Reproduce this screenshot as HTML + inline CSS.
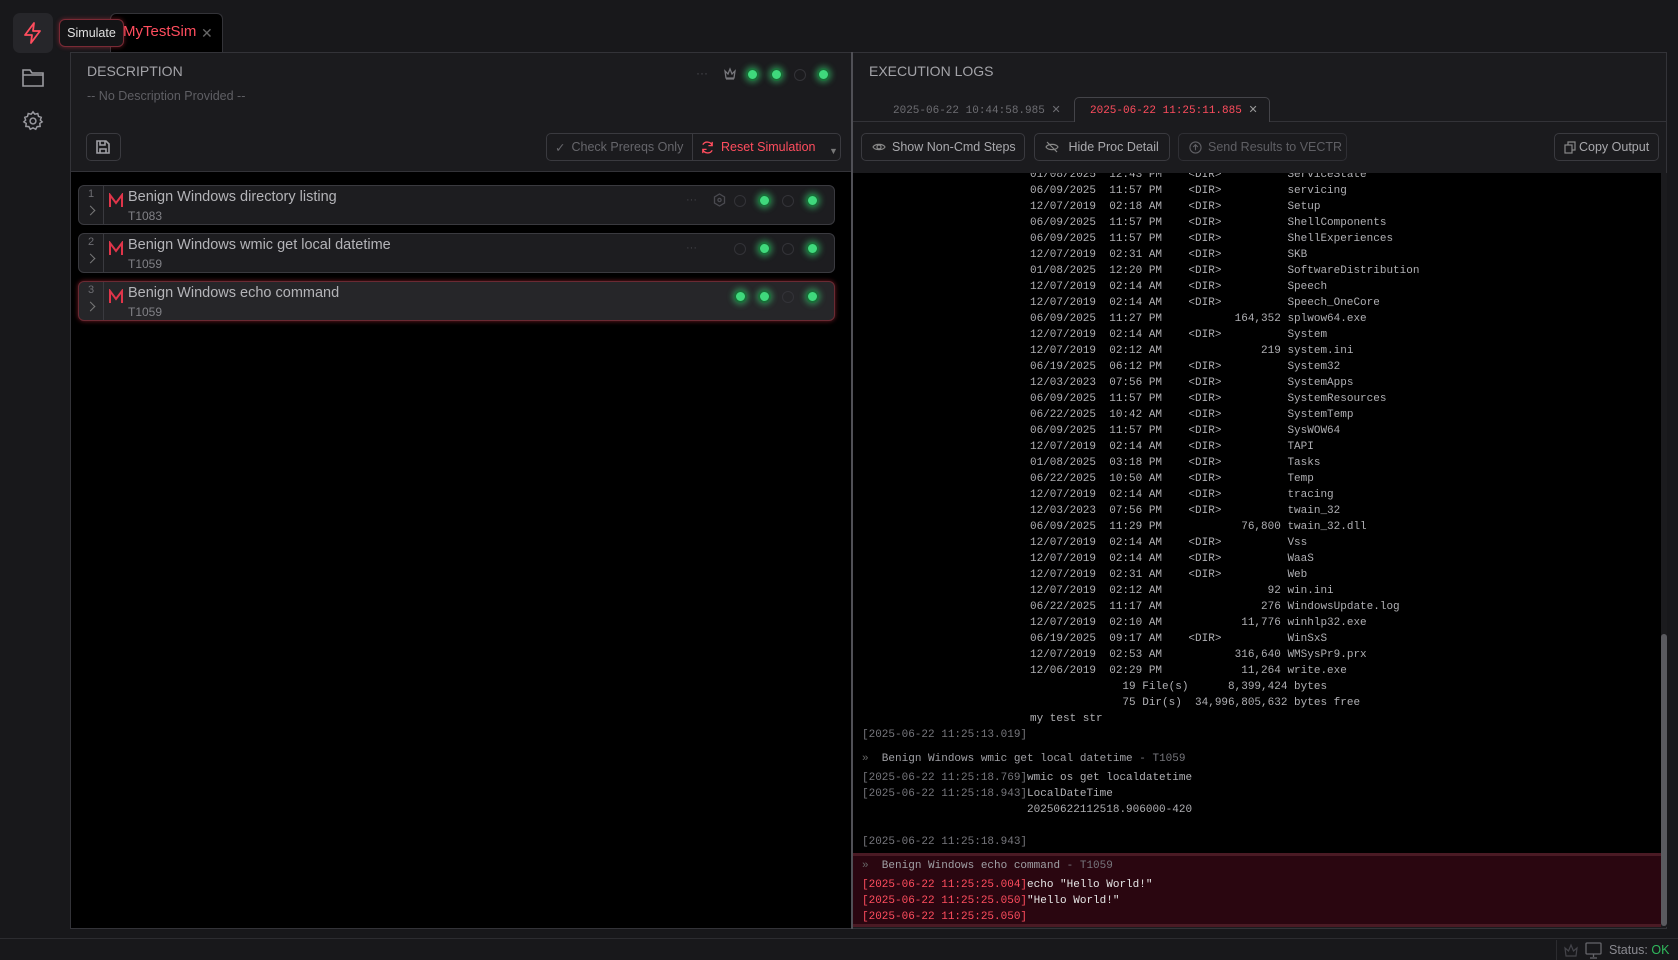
<!DOCTYPE html>
<html><head><meta charset="utf-8">
<style>
*{box-sizing:border-box;margin:0;padding:0}
body{width:1678px;height:960px;background:#18181b;font-family:"Liberation Sans",sans-serif;color:#a9a9ad;position:relative;overflow:hidden}
.abs{position:absolute}
.dot{position:absolute;width:13px;height:13px;border-radius:50%;background:#3fd97c;border:2px solid #1a6b38;box-shadow:0 0 6px 2px rgba(60,220,120,.45)}
.odot{position:absolute;width:12px;height:12px;border-radius:50%;border:1.5px solid #333338}
.btn{position:absolute;border:1px solid #3a3a3f;border-radius:5px;font-size:12.5px;color:#a9a9ad;display:flex;align-items:center;gap:6px;padding-left:10px}
.card{position:absolute;left:78px;width:757px;height:40px;background:#1d1d20;border:1px solid #3a3a3f;border-radius:6px}
.card .num{position:absolute;left:0;top:0;width:25px;height:100%;border-right:1px solid #3a3a3f;color:#6d6d72;font-size:11px;text-align:center;padding-top:2px}
.card .chev{position:absolute;left:8px;top:21px;width:7px;height:7px;border-right:1.5px solid #777;border-top:1.5px solid #777;transform:rotate(45deg)}
.card .t{position:absolute;left:49px;top:3px;font-size:14.5px;color:#b4b4b8}
.card .id{position:absolute;left:49px;top:23px;font-size:12px;color:#818186}
.card svg.m{position:absolute;left:29px;top:7px}
pre{font-family:"Liberation Mono",monospace;font-size:11px;line-height:16px;color:#b0b0b4}
.ts{color:#76767c}
.rts{color:#ff4d5e}
</style></head><body>
<div class="abs" style="left:13px;top:13px;width:40px;height:40px;background:#26262a;border-radius:7px"></div>
<svg class="abs" style="left:21px;top:21px" width="24" height="24" viewBox="0 0 24 24" fill="none" stroke="#ff4d5e" stroke-width="1.8" stroke-linejoin="round"><path d="M13 2 4 14h7l-1 8 9-12h-7l1-8z"/></svg>
<svg class="abs" style="left:21px;top:67px" width="24" height="22" viewBox="0 0 24 22" fill="none" stroke="#9a9aa0" stroke-width="1.6"><path d="M2 3h7l2 3h11v13H2z M2 8h20"/></svg>
<svg class="abs" style="left:22px;top:110px" width="22" height="22" viewBox="0 0 24 24" fill="none" stroke="#9a9aa0" stroke-width="1.6"><circle cx="12" cy="12" r="3.2"/><path d="M12 2l2 2.6 3.2-.8.8 3.2L21 8l-1 3 2 2-2.6 1.6.4 3.3-3.3.2L15 21l-3-1.5L9 21l-1.5-2.9-3.3-.2.4-3.3L2 13l2-2-1-3 3-1 .8-3.2L10 4.6z"/></svg>
<div class="abs" style="left:110px;top:13px;width:113px;height:40px;background:#000;border:1px solid #333338;border-bottom:none;border-radius:6px 6px 0 0"></div>
<div class="abs" style="left:123px;top:23px;font-size:15px;color:#ff4d5e">MyTestSim</div>
<div class="abs" style="left:201px;top:25px;font-size:14px;color:#666">✕</div>
<div class="abs" style="left:59px;top:19px;width:65px;height:28px;background:#141416;border:1px solid #7a2a35;border-radius:6px;box-shadow:0 0 5px rgba(255,60,80,.4);font-size:12.5px;color:#e0e0e0;text-align:center;line-height:26px">Simulate</div>
<div class="abs" style="left:70px;top:52px;width:782px;height:877px;background:#000;border:1px solid #333338"></div>
<div class="abs" style="left:71px;top:53px;width:780px;height:119px;background:#1b1b1e;border-bottom:1px solid #333338"></div>
<div class="abs" style="left:87px;top:63px;font-size:14px;color:#a3a3a8">DESCRIPTION</div>
<div class="abs" style="left:87px;top:89px;font-size:12.5px;color:#5f5f64">-- No Description Provided --</div>
<div class="abs" style="left:696px;top:66px;font-size:12px;color:#4a4a4f">···</div>
<svg class="abs" style="left:723px;top:67px" width="14" height="14" viewBox="0 0 14 14" fill="none" stroke="#77777c" stroke-width="1.3"><path d="M2 4l3 3 2-5 2 5 3-3-1 7H3z M3 12h8"/></svg>
<div class="dot" style="left:746px;top:68px"></div><div class="dot" style="left:770px;top:68px"></div><div class="odot" style="left:794px;top:69px"></div><div class="dot" style="left:817px;top:68px"></div>
<div class="abs" style="left:86px;top:133px;width:35px;height:28px;border:1px solid #3a3a3f;border-radius:5px"></div>
<svg class="abs" style="left:95px;top:139px" width="16" height="16" viewBox="0 0 16 16" fill="none" stroke="#a0a0a5" stroke-width="1.6"><path d="M2 2h9l3 3v9H2z M5 2v4h5V2 M5 14v-4h6v4"/></svg>
<div class="btn" style="left:546px;top:133px;width:295px;height:28px;padding-left:8px;color:#66666b"><span>✓</span><span>Check Prereqs Only</span></div>
<div class="abs" style="left:692px;top:134px;width:1px;height:26px;background:#3a3a3f"></div>
<svg class="abs" style="left:700px;top:140px" width="15" height="15" viewBox="0 0 16 16" fill="none" stroke="#ff4d5e" stroke-width="1.4"><path d="M13 6a5.5 5.5 0 0 0-10-1 M3 10a5.5 5.5 0 0 0 10 1 M13 2v4h-4 M3 14v-4h4"/></svg>
<div class="abs" style="left:721px;top:140px;font-size:12.5px;color:#ff4d5e">Reset Simulation</div>
<div class="abs" style="left:829px;top:146px;font-size:9px;color:#777">▼</div>
<div class="card" style="top:185px"><div class="num">1</div><div class="chev"></div><svg class="m" width="16" height="15" viewBox="0 0 16 15" fill="none" stroke="#e0354a" stroke-width="2"><path d="M2 14V2l6 8 6-8v12"/></svg><div class="t">Benign Windows directory listing</div><div class="id">T1083</div>
<div class="abs" style="left:607px;top:8px;font-size:11px;color:#44444a">···</div>
<svg class="abs" style="left:634px;top:7px" width="13" height="14" viewBox="0 0 13 14" fill="none" stroke="#4a4a50" stroke-width="1.3"><path d="M6.5 1l5 3v6l-5 3-5-3V4z"/><circle cx="6.5" cy="7" r="1.6"/></svg>
<div class="odot" style="left:655px;top:9px"></div><div class="dot" style="left:679px;top:8px"></div><div class="odot" style="left:703px;top:9px"></div><div class="dot" style="left:727px;top:8px"></div></div>
<div class="card" style="top:233px"><div class="num">2</div><div class="chev"></div><svg class="m" width="16" height="15" viewBox="0 0 16 15" fill="none" stroke="#e0354a" stroke-width="2"><path d="M2 14V2l6 8 6-8v12"/></svg><div class="t">Benign Windows wmic get local datetime</div><div class="id">T1059</div>
<div class="abs" style="left:607px;top:8px;font-size:11px;color:#44444a">···</div>
<div class="odot" style="left:655px;top:9px"></div><div class="dot" style="left:679px;top:8px"></div><div class="odot" style="left:703px;top:9px"></div><div class="dot" style="left:727px;top:8px"></div></div>
<div class="card" style="top:281px;background:#262629;border-color:#6a2a33;box-shadow:0 0 5px rgba(255,60,80,.45)"><div class="num">3</div><div class="chev"></div><svg class="m" width="16" height="15" viewBox="0 0 16 15" fill="none" stroke="#e0354a" stroke-width="2"><path d="M2 14V2l6 8 6-8v12"/></svg><div class="t">Benign Windows echo command</div><div class="id">T1059</div>
<div class="dot" style="left:655px;top:8px"></div><div class="dot" style="left:679px;top:8px"></div><div class="odot" style="left:703px;top:9px"></div><div class="dot" style="left:727px;top:8px"></div></div>
<div class="abs" style="left:851px;top:52px;width:2px;height:877px;background:#505056"></div>
<div class="abs" style="left:853px;top:52px;width:814px;height:877px;background:#1b1b1e;border:1px solid #333338;border-left:none"></div>
<div class="abs" style="left:869px;top:63px;font-size:14px;color:#a3a3a8">EXECUTION LOGS</div>
<div class="abs" style="left:853px;top:121px;width:814px;height:1px;background:#333338"></div>
<div class="abs" style="left:893px;top:103px;font-family:'Liberation Mono',monospace;font-size:11px;color:#6d6d72">2025-06-22 10:44:58.985 <span style="font-family:'Liberation Sans'">✕</span></div>
<div class="abs" style="left:1074px;top:97px;width:196px;height:25px;background:#1b1b1e;border:1px solid #444449;border-bottom:none;border-radius:5px 5px 0 0"></div>
<div class="abs" style="left:1090px;top:103px;font-family:'Liberation Mono',monospace;font-size:11px;color:#ff4d5e">2025-06-22 11:25:11.885 <span style="font-family:'Liberation Sans';color:#999">✕</span></div>
<div class="btn" style="left:861px;top:133px;width:164px;height:28px"><svg width="14" height="14" viewBox="0 0 14 14" fill="none" stroke="#888" stroke-width="1.2"><path d="M1 7c2-3.5 10-3.5 12 0-2 3.5-10 3.5-12 0z"/><circle cx="7" cy="7" r="2"/></svg>Show Non-Cmd Steps</div>
<div class="btn" style="left:1034px;top:133px;width:136px;height:28px"><svg width="14" height="14" viewBox="0 0 14 14" fill="none" stroke="#888" stroke-width="1.2"><path d="M1 7c2-3.5 10-3.5 12 0-2 3.5-10 3.5-12 0z M2 2l10 10"/></svg>&nbsp;Hide Proc Detail</div>
<div class="btn" style="left:1178px;top:133px;width:169px;height:28px;color:#5f5f64;border-color:#2f2f34"><svg width="13" height="13" viewBox="0 0 14 14" fill="none" stroke="#5f5f64" stroke-width="1.2"><circle cx="7" cy="7" r="6"/><path d="M7 10V4M4.5 6.5 7 4l2.5 2.5"/></svg>Send Results to VECTR</div>
<div class="btn" style="left:1554px;top:133px;width:105px;height:28px;padding-left:9px;gap:3px"><svg width="12" height="13" viewBox="0 0 12 13" fill="none" stroke="#888" stroke-width="1.2"><rect x="1" y="4" width="7" height="8"/><path d="M4 4V1h7v8H8"/></svg>Copy Output</div>
<div class="abs" style="left:853px;top:173px;width:808px;height:754px;background:#000;overflow:hidden">
<pre class="abs" style="left:177px;top:-6px">01/08/2025  12:43 PM    &lt;DIR&gt;          ServiceState
06/09/2025  11:57 PM    &lt;DIR&gt;          servicing
12/07/2019  02:18 AM    &lt;DIR&gt;          Setup
06/09/2025  11:57 PM    &lt;DIR&gt;          ShellComponents
06/09/2025  11:57 PM    &lt;DIR&gt;          ShellExperiences
12/07/2019  02:31 AM    &lt;DIR&gt;          SKB
01/08/2025  12:20 PM    &lt;DIR&gt;          SoftwareDistribution
12/07/2019  02:14 AM    &lt;DIR&gt;          Speech
12/07/2019  02:14 AM    &lt;DIR&gt;          Speech_OneCore
06/09/2025  11:27 PM           164,352 splwow64.exe
12/07/2019  02:14 AM    &lt;DIR&gt;          System
12/07/2019  02:12 AM               219 system.ini
06/19/2025  06:12 PM    &lt;DIR&gt;          System32
12/03/2023  07:56 PM    &lt;DIR&gt;          SystemApps
06/09/2025  11:57 PM    &lt;DIR&gt;          SystemResources
06/22/2025  10:42 AM    &lt;DIR&gt;          SystemTemp
06/09/2025  11:57 PM    &lt;DIR&gt;          SysWOW64
12/07/2019  02:14 AM    &lt;DIR&gt;          TAPI
01/08/2025  03:18 PM    &lt;DIR&gt;          Tasks
06/22/2025  10:50 AM    &lt;DIR&gt;          Temp
12/07/2019  02:14 AM    &lt;DIR&gt;          tracing
12/03/2023  07:56 PM    &lt;DIR&gt;          twain_32
06/09/2025  11:29 PM            76,800 twain_32.dll
12/07/2019  02:14 AM    &lt;DIR&gt;          Vss
12/07/2019  02:14 AM    &lt;DIR&gt;          WaaS
12/07/2019  02:31 AM    &lt;DIR&gt;          Web
12/07/2019  02:12 AM                92 win.ini
06/22/2025  11:17 AM               276 WindowsUpdate.log
12/07/2019  02:10 AM            11,776 winhlp32.exe
06/19/2025  09:17 AM    &lt;DIR&gt;          WinSxS
12/07/2019  02:53 AM           316,640 WMSysPr9.prx
12/06/2019  02:29 PM            11,264 write.exe
              19 File(s)      8,399,424 bytes
              75 Dir(s)  34,996,805,632 bytes free
my test str</pre>
<pre class="abs" style="left:9px;top:554px"><span class="ts">[2025-06-22 11:25:13.019]</span></pre>
<pre class="abs" style="left:9px;top:578px;color:#a0a0a5"><span style="color:#666">»</span>  Benign Windows wmic get local datetime <span class="ts">- T1059</span></pre>
<pre class="abs" style="left:9px;top:597px"><span class="ts">[2025-06-22 11:25:18.769]</span>wmic os get localdatetime
<span class="ts">[2025-06-22 11:25:18.943]</span>LocalDateTime
                         20250622112518.906000-420

<span class="ts">[2025-06-22 11:25:18.943]</span></pre>
<div class="abs" style="left:0;top:680px;width:808px;height:74px;background:#2a0610;border-top:3px solid #4a1a24;border-bottom:3px solid #4a1a24"></div>
<pre class="abs" style="left:9px;top:685px;color:#a0a0a5"><span style="color:#666">»</span>  Benign Windows echo command <span class="ts">- T1059</span></pre>
<pre class="abs" style="left:9px;top:704px;color:#e6e6e6"><span class="rts">[2025-06-22 11:25:25.004]</span>echo "Hello World!"
<span class="rts">[2025-06-22 11:25:25.050]</span>"Hello World!"
<span class="rts">[2025-06-22 11:25:25.050]</span></pre>
</div>
<div class="abs" style="left:1661px;top:173px;width:6px;height:754px;background:#1b1b1e"></div>
<div class="abs" style="left:1661px;top:634px;width:6px;height:292px;background:#5a5a5f;border-radius:3px"></div>
<div class="abs" style="left:0;top:938px;width:1678px;height:1px;background:#2c2c30"></div>
<div class="abs" style="left:1556px;top:940px;width:1px;height:20px;background:#2c2c30"></div>
<svg class="abs" style="left:1563px;top:943px" width="16" height="15" viewBox="0 0 16 15" fill="none" stroke="#44444a" stroke-width="1.2"><path d="M2 5l3.5 3L8 2l2.5 6L14 5l-1 8H3z"/></svg>
<svg class="abs" style="left:1585px;top:942px" width="17" height="17" viewBox="0 0 17 17" fill="none" stroke="#66666b" stroke-width="1.3"><rect x="1" y="1" width="15" height="11" rx="1"/><path d="M8.5 12v3M5 16h7"/></svg>
<div class="abs" style="left:1609px;top:943px;font-size:12.5px;color:#8a8a90">Status: <span style="color:#2fb85c">OK</span></div>
</body></html>
